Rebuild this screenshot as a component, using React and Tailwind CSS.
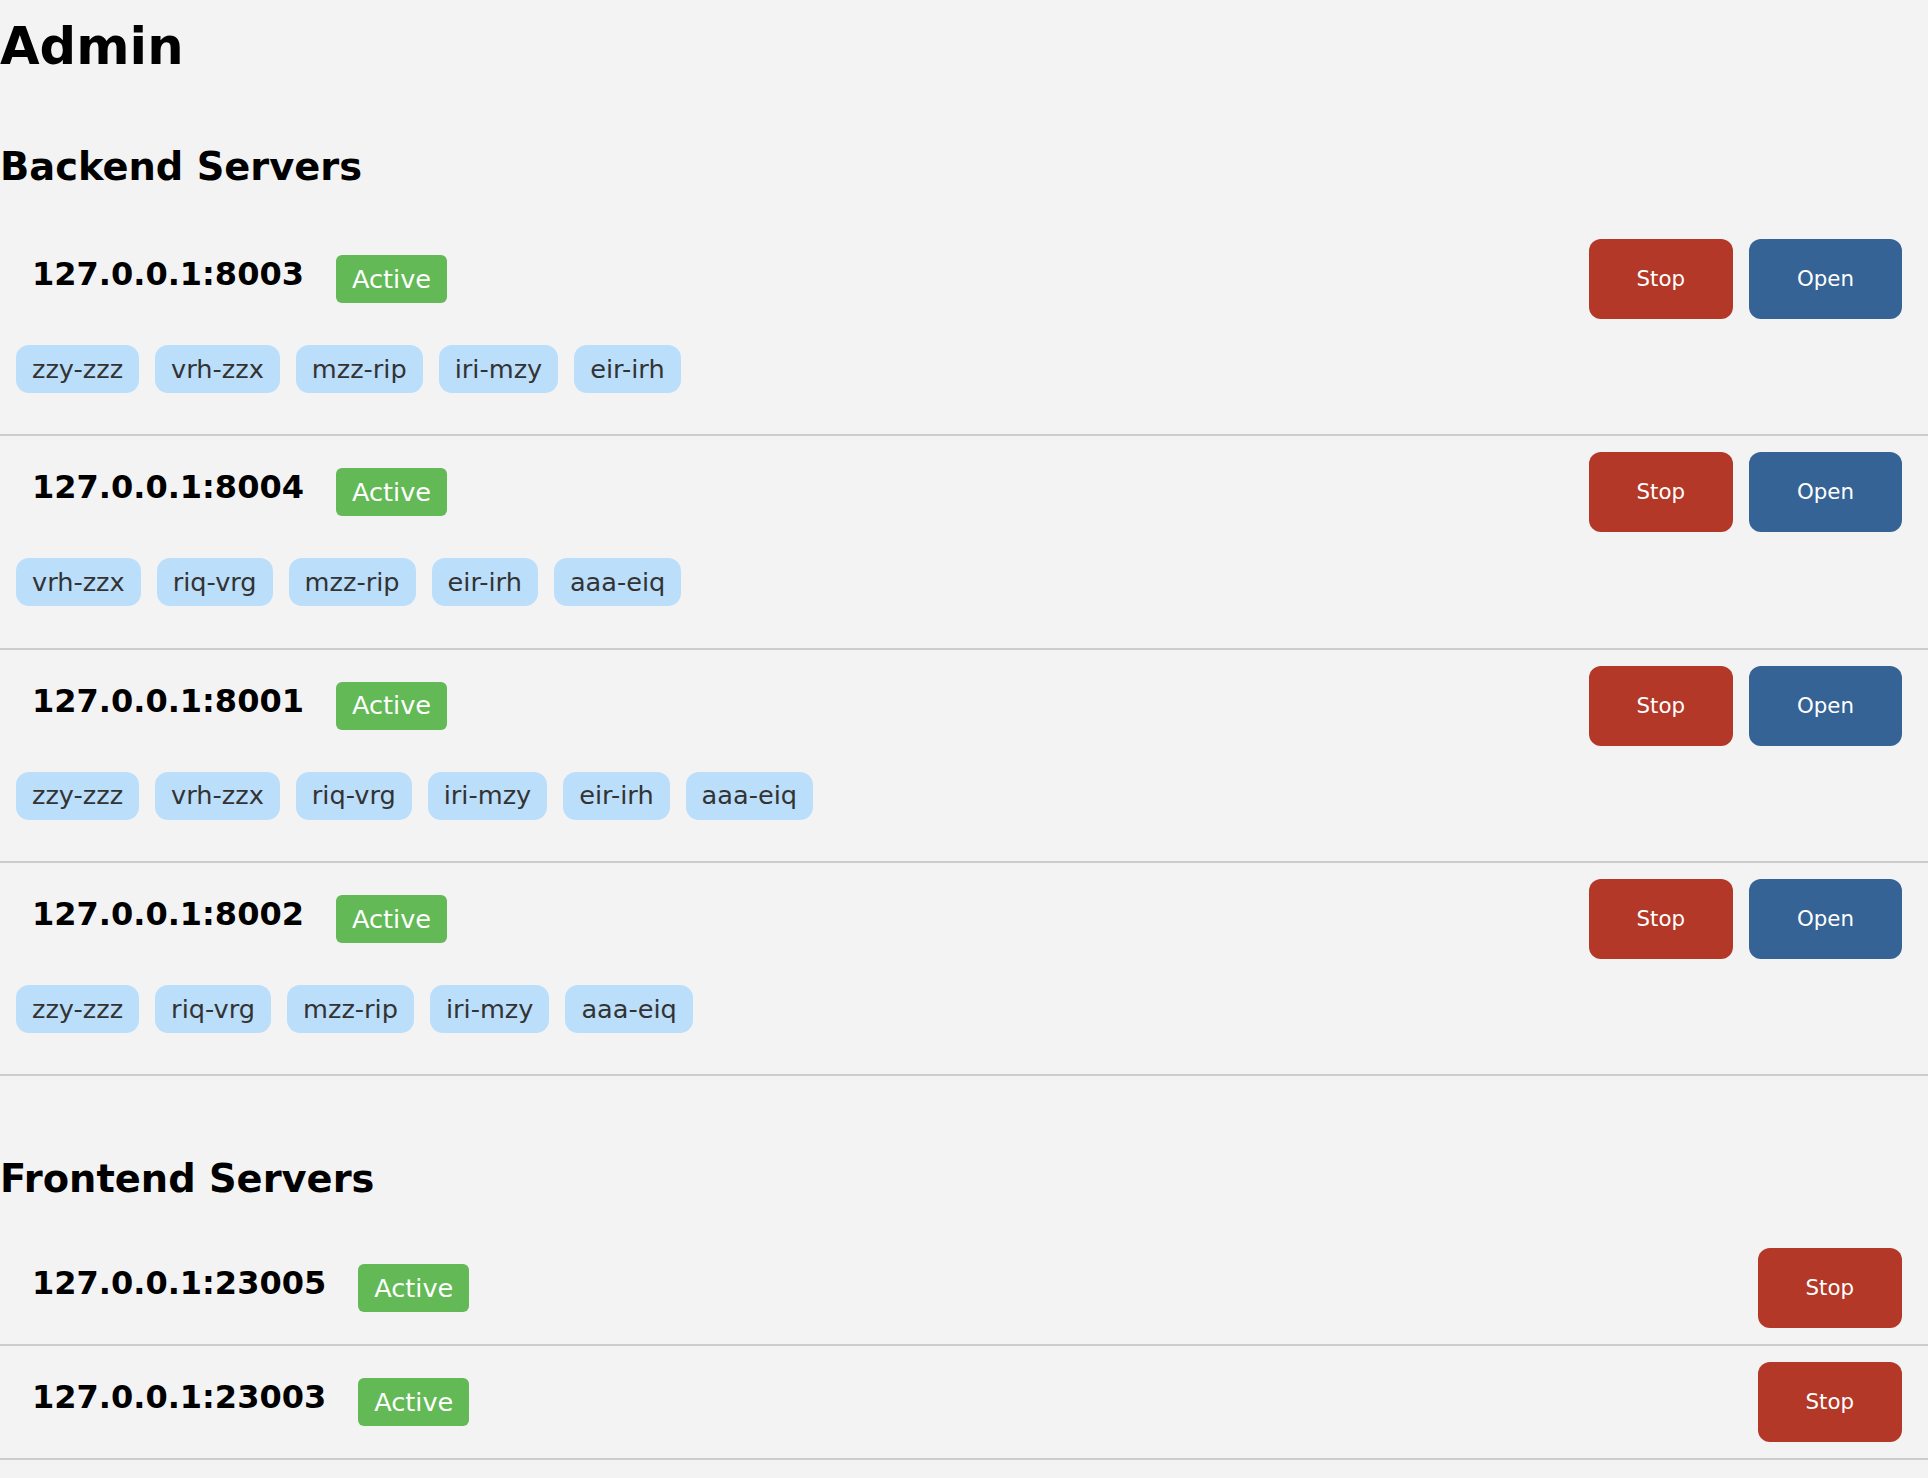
import React from "react";

const backend = [
  { addr: "127.0.0.1:8003", tags: ["zzy-zzz", "vrh-zzx", "mzz-rip", "iri-mzy", "eir-irh"] },
  { addr: "127.0.0.1:8004", tags: ["vrh-zzx", "riq-vrg", "mzz-rip", "eir-irh", "aaa-eiq"] },
  { addr: "127.0.0.1:8001", tags: ["zzy-zzz", "vrh-zzx", "riq-vrg", "iri-mzy", "eir-irh", "aaa-eiq"] },
  { addr: "127.0.0.1:8002", tags: ["zzy-zzz", "riq-vrg", "mzz-rip", "iri-mzy", "aaa-eiq"] },
];

const frontend = ["127.0.0.1:23005", "127.0.0.1:23003"];

function Badge() {
  return (
    <span className="flex h-[48px] items-center rounded-[6px] bg-[#62b955] px-[16px] text-[25.6px] text-white">
      Active
    </span>
  );
}

function Head({ addr }) {
  return (
    <div className="flex items-center pl-[16px]">
      <span className="mb-[10px] text-[32px] font-bold text-black">{addr}</span>
      <span className="ml-[32px]">
        <Badge />
      </span>
    </div>
  );
}

function Btn({ children, color }) {
  return (
    <button
      className={
        "flex h-[80px] items-center rounded-[12px] px-[48px] text-[21.33px] text-white " + color
      }
    >
      {children}
    </button>
  );
}

export default function App() {
  return (
    <div className="min-h-screen bg-[#f3f3f3] font-['DejaVu_Sans',sans-serif] text-black">
      <h1 className="pt-[16px] text-[51.2px] font-bold leading-[60px]">Admin</h1>
      <h2 className="mt-[68px] text-[38.4px] font-bold leading-[45px]">Backend Servers</h2>
      <div className="mt-[34px]">
        {backend.map((s) => (
          <div
            key={s.addr}
            className="border-b-2 border-[#cccccc] pb-[41.33px] pl-[16px] pr-[26px] pt-[16px]"
          >
            <div className="flex h-[80px] items-center justify-between">
              <Head addr={s.addr} />
              <div className="flex gap-[16px]">
                <Btn color="bg-[#b33827]">Stop</Btn>
                <Btn color="bg-[#356395]">Open</Btn>
              </div>
            </div>
            <div className="mt-[26px] flex gap-[16px]">
              {s.tags.map((t) => (
                <span
                  key={t}
                  className="flex h-[48px] items-center rounded-[13px] bg-[#bbdefb] px-[16px] text-[25.6px] text-[#333333]"
                >
                  {t}
                </span>
              ))}
            </div>
          </div>
        ))}
      </div>
      <h2 className="mt-[80px] text-[38.4px] font-bold leading-[45px]">Frontend Servers</h2>
      <div className="mt-[31px]">
        {frontend.map((a) => (
          <div
            key={a}
            className="border-b-2 border-[#cccccc] pb-[16px] pl-[16px] pr-[26px] pt-[16px]"
          >
            <div className="flex h-[80px] items-center justify-between">
              <Head addr={a} />
              <Btn color="bg-[#b33827]">Stop</Btn>
            </div>
          </div>
        ))}
      </div>
    </div>
  );
}
